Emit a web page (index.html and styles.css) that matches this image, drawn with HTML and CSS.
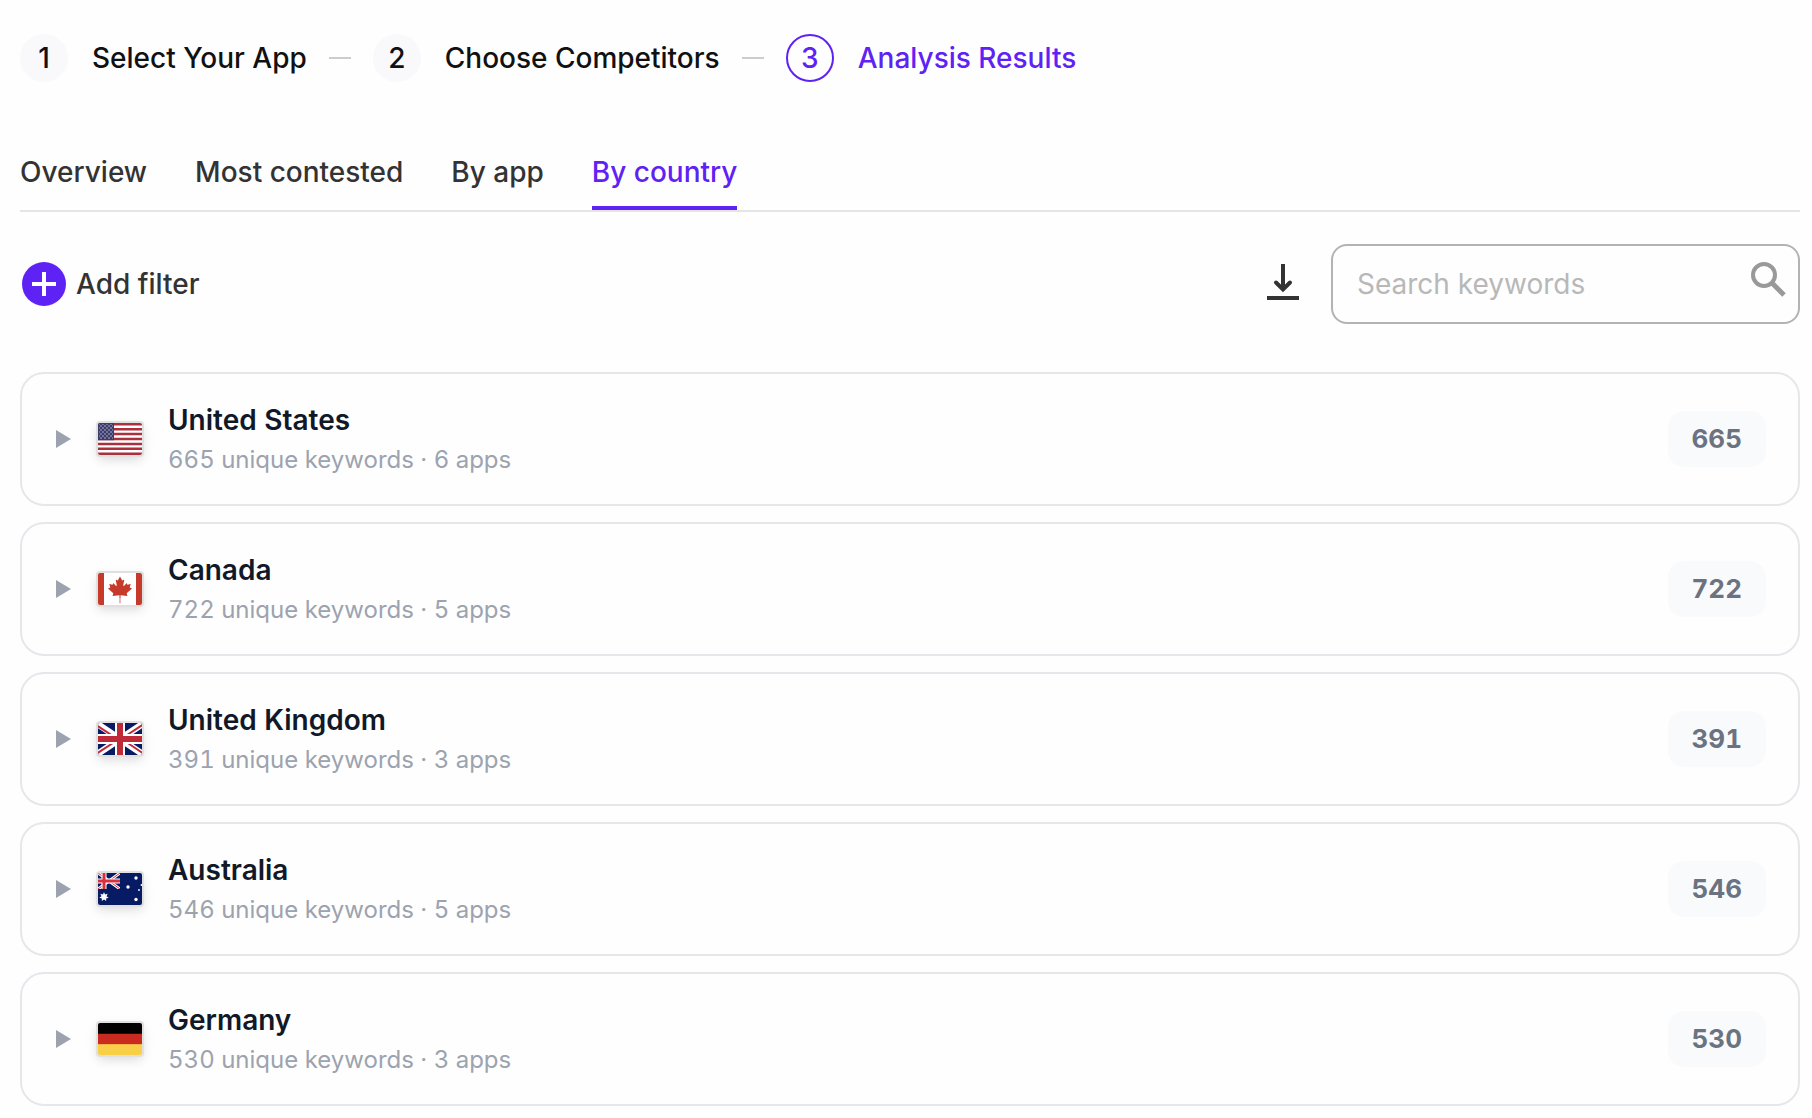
FILE: index.html
```html
<!DOCTYPE html>
<html lang="en">
<head>
<meta charset="utf-8">
<meta name="viewport" content="width=device-width, initial-scale=1">
<title>Analysis Results</title>
<link rel="stylesheet" href="styles.css">
</head>
<body>
<main class="page">
  <ol class="steps">
    <li class="step"><span class="step-number">1</span><span>Select Your App</span></li>
    <li class="step"><span class="step-number">2</span><span>Choose Competitors</span></li>
    <li class="step step-current" aria-current="step"><span class="step-number">3</span><span>Analysis Results</span></li>
  </ol>

  <nav class="tabs" aria-label="Result views">
    <a class="tab" href="#overview">Overview</a>
    <a class="tab" href="#contested">Most contested</a>
    <a class="tab" href="#app">By app</a>
    <a class="tab tab-active" href="#country" aria-current="page">By country</a>
  </nav>

  <div class="toolbar">
    <button class="add-filter" type="button">
      <svg width="48" height="48" viewBox="0 0 48 48" aria-hidden="true"><circle cx="24" cy="24" r="22" fill="#5f22f5"/><path d="M24 12v24M12 24h24" stroke="#fff" stroke-width="4"/></svg>
      <span>Add filter</span>
    </button>
    <div class="tools">
      <button class="download" type="button" aria-label="Download">
        <svg width="40" height="40" viewBox="0 0 40 40" aria-hidden="true"><path d="M20 0v24" fill="none" stroke="#333" stroke-width="4"/><path d="M13 18.500l7 7 7-7" fill="none" stroke="#333" stroke-width="4" stroke-linecap="round"/><path d="M4 34h32" stroke="#333" stroke-width="4"/></svg>
      </button>
      <label class="search">
        <input class="search-input" type="search" placeholder="Search keywords" aria-label="Search keywords">
        <svg class="search-icon" width="36" height="36" viewBox="0 0 36 36" aria-hidden="true"><circle cx="14" cy="14" r="11" fill="none" stroke="#999" stroke-width="4"/><path d="M22 22l12 12" stroke="#999" stroke-width="5"/></svg>
      </label>
    </div>
  </div>

  <ul class="countries">
    <li>
      <button class="country" type="button" aria-expanded="false">
        <svg class="arrow" width="15" height="18" viewBox="0 0 15 18" aria-hidden="true"><path d="M0 0l15 9-15 9z" fill="#9ca3af"/></svg>
        <svg class="flag" viewBox="0 0 44 32" aria-hidden="true">
          <defs><pattern id="stars" width="4" height="4" patternUnits="userSpaceOnUse"><circle cx="1" cy="1" r=".7" fill="#d5d4e4"/><circle cx="3" cy="3" r=".7" fill="#d5d4e4"/></pattern></defs>
          <path fill="#fff" d="M0 0h44v32H0z"/>
          <path stroke="#a9303c" stroke-width="2.460" d="M0 1.230h44M0 6.150h44M0 11.080h44M0 16h44M0 20.920h44M0 25.850h44M0 30.770h44"/>
          <path fill="#3c3b6e" d="M0 0h16v17.200H0z"/><path fill="url(#stars)" d="M1 1h14v15H1z"/>
        </svg>
        <span class="country-text"><span class="country-name">United States</span><span class="country-meta">665 unique keywords · 6 apps</span></span>
        <span class="count">665</span>
      </button>
    </li>
    <li>
      <button class="country" type="button" aria-expanded="false">
        <svg class="arrow" width="15" height="18" viewBox="0 0 15 18" aria-hidden="true"><path d="M0 0l15 9-15 9z" fill="#9ca3af"/></svg>
        <svg class="flag" viewBox="0 0 44 32" aria-hidden="true">
          <path fill="#fff" d="M0 0h44v32H0z"/><path fill="#c63a2b" d="M0 0h6v32H0zM38 0h6v32h-6z"/>
          <path fill="#c63a2b" d="M22 3.500l-2.200 4-2.100-1 1.100 6-.7.500-2.900-3-.6 1.700-3.300-.6 1 3.400-2.300 1 5.300 4.700-.7 2.800 6.900-.7-.2 8h1.400l-.2-8 6.900.7-.7-2.800 5.300-4.700-2.300-1 1-3.400-3.300.6-.6-1.700-2.900 3-.7-.500 1.100-6-2.100 1z"/>
          <path fill="#fff" fill-opacity=".45" d="M21 25h2v6h-2z"/>
        </svg>
        <span class="country-text"><span class="country-name">Canada</span><span class="country-meta">722 unique keywords · 5 apps</span></span>
        <span class="count">722</span>
      </button>
    </li>
    <li>
      <button class="country" type="button" aria-expanded="false">
        <svg class="arrow" width="15" height="18" viewBox="0 0 15 18" aria-hidden="true"><path d="M0 0l15 9-15 9z" fill="#9ca3af"/></svg>
        <svg class="flag" viewBox="0 0 44 32" aria-hidden="true">
          <path fill="#071b65" d="M0 0h44v32H0z"/>
          <path stroke="#fff" stroke-width="6.500" d="M-2 0l48 32M46 0L-2 32"/>
          <path stroke="#be2a38" stroke-width="2" d="M-2 2l20 13M46 1L26 14M46 31L26 17.500M-2 31L18 18"/>
          <path stroke="#fff" stroke-width="10" d="M22 0v32M0 16h44"/>
          <path stroke="#be2a38" stroke-width="6" d="M22 0v32M0 16h44"/>
        </svg>
        <span class="country-text"><span class="country-name">United Kingdom</span><span class="country-meta">391 unique keywords · 3 apps</span></span>
        <span class="count">391</span>
      </button>
    </li>
    <li>
      <button class="country" type="button" aria-expanded="false">
        <svg class="arrow" width="15" height="18" viewBox="0 0 15 18" aria-hidden="true"><path d="M0 0l15 9-15 9z" fill="#9ca3af"/></svg>
        <svg class="flag" viewBox="0 0 44 32" aria-hidden="true">
          <path fill="#071b65" d="M0 0h44v32H0z"/>
          <svg width="22" height="16" viewBox="0 0 22 16"><path stroke="#fff" stroke-width="3" d="M0 0l22 16M22 0L0 16"/><path stroke="#d02d3c" stroke-width="1" d="M0 0l22 16M22 0L0 16"/><path stroke="#fff" stroke-width="5" d="M6 0v16M0 8h22"/><path stroke="#d8303f" stroke-width="3" d="M6 0v16M0 8h22"/></svg>
          <path fill="#fff" d="M6 19l1 2.500 2.700-.7-1.200 2.500 2.200 1.500-2.600.6.100 2.700L6 26.500l-2.200 1.600.1-2.700-2.600-.6 2.200-1.500-1.200-2.500 2.700.7z"/>
          <g fill="#fff"><circle cx="38" cy="5" r="1.700"/><circle cx="30" cy="14" r="1.700"/><circle cx="38" cy="26.500" r="1.700"/><circle cx="43.500" cy="12" r=".9"/><circle cx="41" cy="17" r=".9"/></g>
        </svg>
        <span class="country-text"><span class="country-name">Australia</span><span class="country-meta">546 unique keywords · 5 apps</span></span>
        <span class="count">546</span>
      </button>
    </li>
    <li>
      <button class="country" type="button" aria-expanded="false">
        <svg class="arrow" width="15" height="18" viewBox="0 0 15 18" aria-hidden="true"><path d="M0 0l15 9-15 9z" fill="#9ca3af"/></svg>
        <svg class="flag" viewBox="0 0 44 32" aria-hidden="true"><path d="M0 0h44v11H0z"/><path fill="#cb2b1e" d="M0 10.700h44v11H0z"/><path fill="#f8cf46" d="M0 21.300h44V32H0z"/></svg>
        <span class="country-text"><span class="country-name">Germany</span><span class="country-meta">530 unique keywords · 3 apps</span></span>
        <span class="count">530</span>
      </button>
    </li>
  </ul>
</main>
</body>
</html>
```
FILE: styles.css
```css
* {
  box-sizing: border-box;
}

body {
  margin: 0;
  background: #fefefe;
  color: #333;
  font: 400 28px/34px Inter, "Liberation Sans", sans-serif;
  font-optical-sizing: none;
}

button,
input {
  font: inherit;
  color: inherit;
}

button {
  padding: 0;
  border: 0;
  background: none;
  cursor: pointer;
}

svg {
  display: block;
  flex: none;
}

.page {
  padding: 34px 12px 12px 20px;
}

/* Wizard steps */
.steps {
  display: flex;
  align-items: center;
  gap: 22px;
  margin: 0;
  padding: 0;
  list-style: none;
  color: #111;
  font-weight: 500;
}

.step {
  display: flex;
  align-items: center;
  gap: 24px;
  white-space: nowrap;
}

.step + .step::before {
  content: "";
  width: 22px;
  height: 2px;
  margin-right: -2px;
  background: #ccc;
}

.step-number {
  display: grid;
  place-items: center;
  width: 48px;
  height: 48px;
  border-radius: 50%;
  background: #f9f9fc;
}

.step-current {
  color: #5f22f5;
}

.step-current .step-number {
  border: 2px solid #5f22f5;
  background: none;
}

/* View tabs */
.tabs {
  display: flex;
  gap: 48px;
  margin-top: 73px;
  border-bottom: 2px solid #e5e5e5;
}

.tab {
  padding-bottom: 17px;
  border-bottom: 4px solid transparent;
  color: #333;
  font-weight: 500;
  text-decoration: none;
  white-space: nowrap;
}

.tab-active {
  border-color: #5f22f5;
  color: #5f22f5;
}

/* Filter and search bar */
.toolbar,
.tools {
  display: flex;
  align-items: center;
}

.toolbar {
  justify-content: space-between;
  margin-top: 32px;
}

.tools {
  gap: 28px;
}

.add-filter {
  display: flex;
  align-items: center;
  gap: 8px;
  font-weight: 500;
}

.search {
  position: relative;
}

.search-input {
  display: block;
  width: 469px;
  height: 80px;
  padding: 0 60px 0 24px;
  border: 2px solid #b3b3b3;
  border-radius: 16px;
  background: none;
  outline: none;
  appearance: none;
}

.search-input::placeholder {
  color: #b8b8b8;
  opacity: 1;
}

.search-icon {
  position: absolute;
  top: 17px;
  right: 14px;
}

/* Country list */
.countries {
  display: grid;
  gap: 16px;
  margin: 48px 0 0;
  padding: 0;
  list-style: none;
}

.country {
  display: flex;
  align-items: center;
  width: 100%;
  padding: 26px 32px 26px 34px;
  border: 2px solid #e5e7eb;
  border-radius: 24px;
  text-align: left;
  font-variant-numeric: tabular-nums;
}

.flag {
  width: 44px;
  height: 32px;
  margin: 0 26px 0 27px;
  border-radius: 2px;
  box-shadow: 0 0 0 2px #e0e0e0, 0 4px 12px rgba(0, 0, 0, 0.16);
}

.country-text {
  display: grid;
  flex: 1;
  gap: 2px;
}

.country-name {
  color: #111827;
  font-weight: 600;
  line-height: 40px;
}

.country-meta {
  color: #9ca3af;
  font-size: 24px;
  line-height: 36px;
}

.count {
  padding: 12px 24px;
  border-radius: 16px;
  background: #f9fafb;
  color: #6b7280;
  font-size: 26px;
  font-weight: 700;
  line-height: 32px;
}
```
